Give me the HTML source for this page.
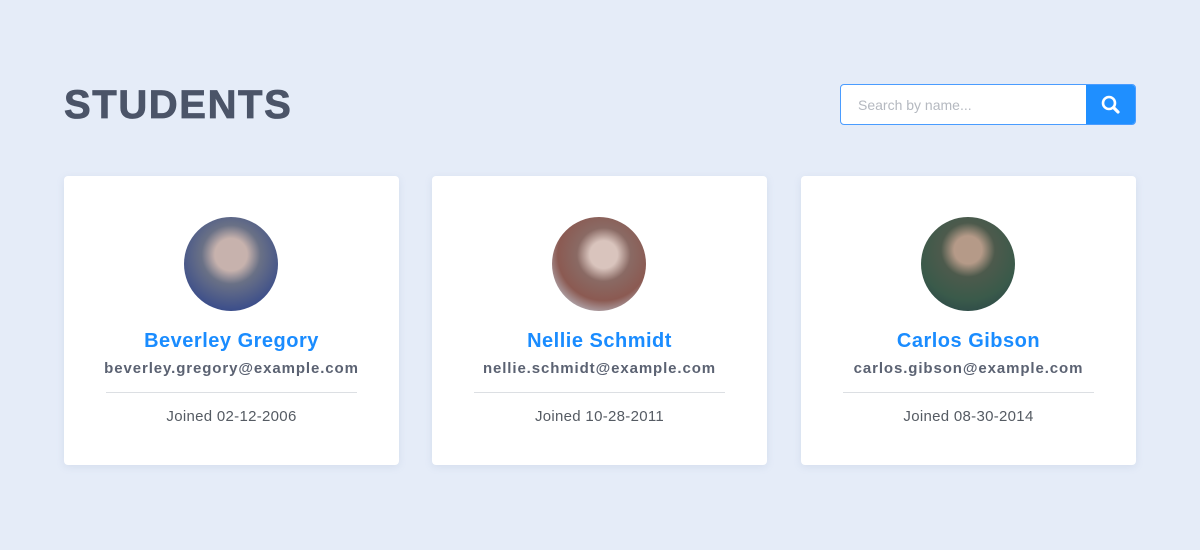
<!DOCTYPE html>
<html><head><style>
body{margin:0;width:1200px;height:550px;background:#e5ecf8;font-family:"Liberation Sans",sans-serif;position:relative;overflow:hidden}
h1{position:absolute;left:64px;top:82px;margin:0;font-size:40px;font-weight:bold;color:#4b5468;letter-spacing:1.6px;line-height:46px;-webkit-text-stroke:0.8px #4b5468}
.search{position:absolute;left:840px;top:84px;width:296px;height:41px;border:1px solid #4a9cff;border-radius:4px;box-sizing:border-box;background:#fff;overflow:hidden}
.search span{position:absolute;left:17px;top:12px;font-size:14px;color:#b5b9c0}
.search .btn{position:absolute;right:0;top:0;width:49px;height:41px;background:#1f8fff;margin-top:-1px}
.card{position:absolute;top:176px;width:335px;height:289px;background:#fff;border-radius:4px;box-shadow:0 2px 8px rgba(120,140,180,.15);text-align:center}
.av{position:absolute;left:120px;top:41px;width:94px;height:94px;border-radius:50%}
.name{position:absolute;left:0;right:0;top:154px;font-size:20px;font-weight:bold;color:#1a8cff;letter-spacing:.5px}
.mail{position:absolute;left:0;right:0;top:184px;font-size:15px;font-weight:bold;color:#5b6272;letter-spacing:.9px}
.hr{position:absolute;left:42px;width:251px;top:216px;border-top:1px solid #dcdfe3}
.join{position:absolute;left:0;right:0;top:232px;font-size:15px;color:#555b63;letter-spacing:.3px}
</style></head><body>
<h1>STUDENTS</h1>
<div class="search"><span>Search by name...</span><div class="btn"><svg width="49" height="41" viewBox="0 0 49 41"><circle cx="23" cy="19" r="6" fill="none" stroke="#fff" stroke-width="2.6"/><path d="M27.5 23.5 L32 28" stroke="#fff" stroke-width="3.2" stroke-linecap="round"/></svg></div></div>
<div class="card" style="left:64px"><div class="av" style="background:radial-gradient(circle at 50% 40%,#c7b2ad 0 22%,#6a7186 40%,#3d4f8a 75%,#2c4590)"></div><div class="name">Beverley Gregory</div><div class="mail">beverley.gregory@example.com</div><div class="hr"></div><div class="join">Joined 02-12-2006</div></div>
<div class="card" style="left:432px"><div class="av" style="background:radial-gradient(circle at 55% 40%,#d9c4bd 0 18%,#8a6a64 35%,#8b5a52 60%,#c0c6d2 85%)"></div><div class="name">Nellie Schmidt</div><div class="mail">nellie.schmidt@example.com</div><div class="hr"></div><div class="join">Joined 10-28-2011</div></div>
<div class="card" style="left:801px"><div class="av" style="background:radial-gradient(circle at 50% 35%,#b59a88 0 18%,#4d5a4c 35%,#3a5a4a 65%,#2d4a48 85%)"></div><div class="name">Carlos Gibson</div><div class="mail">carlos.gibson@example.com</div><div class="hr"></div><div class="join">Joined 08-30-2014</div></div>
</body></html>
